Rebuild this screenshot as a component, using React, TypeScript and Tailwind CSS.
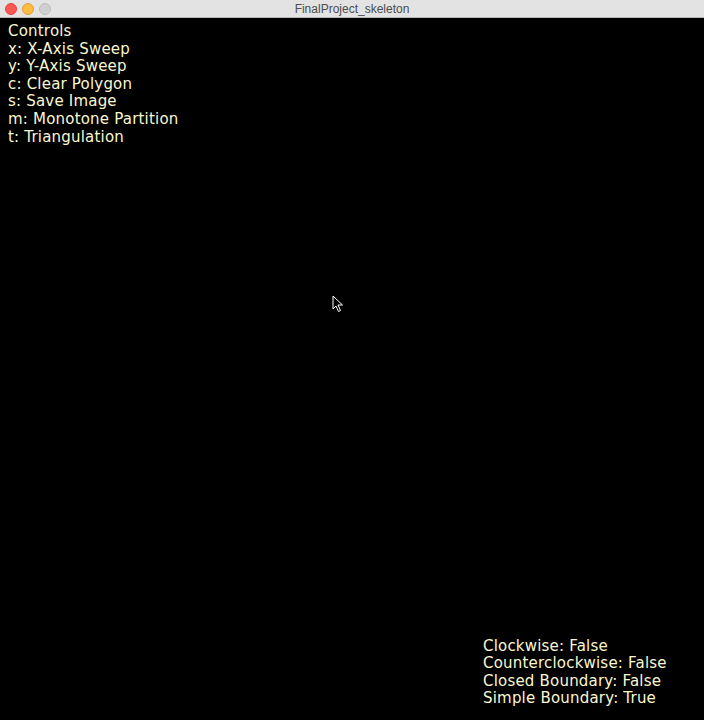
export default function App() {
  const controls = [
    "Controls",
    "x: X-Axis Sweep",
    "y: Y-Axis Sweep",
    "c: Clear Polygon",
    "s: Save Image",
    "m: Monotone Partition",
    "t: Triangulation",
  ];
  const status = [
    "Clockwise: False",
    "Counterclockwise: False",
    "Closed Boundary: False",
    "Simple Boundary: True",
  ];

  return (
    <div className="w-[704px] h-[720px] flex flex-col bg-black font-['DejaVu_Sans',sans-serif]">
      {/* title bar */}
      <div className="h-[18px] shrink-0 flex items-center bg-[#e3e3e3] border-b border-[#b5b5b5] px-[5px]">
        <div className="flex gap-[5px] w-[60px]">
          <span className="size-[12px] rounded-full bg-[#fc5753] border border-[#df4744]" />
          <span className="size-[12px] rounded-full bg-[#fdbc40] border border-[#de9f34]" />
          <span className="size-[12px] rounded-full bg-[#d0d0d0] border border-[#bdbdbd]" />
        </div>
        <div className="flex-1 text-center text-[12px] leading-none text-[#4d4d4d] font-['Liberation_Sans',sans-serif] pr-[60px]">
          FinalProject_skeleton
        </div>
      </div>

      {/* canvas */}
      <div className="flex-1 flex flex-col justify-between relative text-[#fbf7cf] text-[15px] tracking-[0.2px] leading-[17.6px]">
        <div className="pl-[8px] pt-[5px]">
          {controls.map((c) => (
            <div key={c}>{c}</div>
          ))}
        </div>

        <svg
          className="absolute left-[332px] top-[277px]"
          width="12"
          height="18"
          viewBox="0 0 12 18"
        >
          <path
            d="M1 1 L1 14 L4 11 L6.5 16.5 L8.5 15.5 L6 10 L10.5 10 Z"
            fill="#000"
            stroke="#fff"
            strokeWidth="1"
            strokeLinejoin="round"
          />
        </svg>

        <div className="self-end w-[221px] pb-[12px]">
          {status.map((s) => (
            <div key={s}>{s}</div>
          ))}
        </div>
      </div>
    </div>
  );
}
